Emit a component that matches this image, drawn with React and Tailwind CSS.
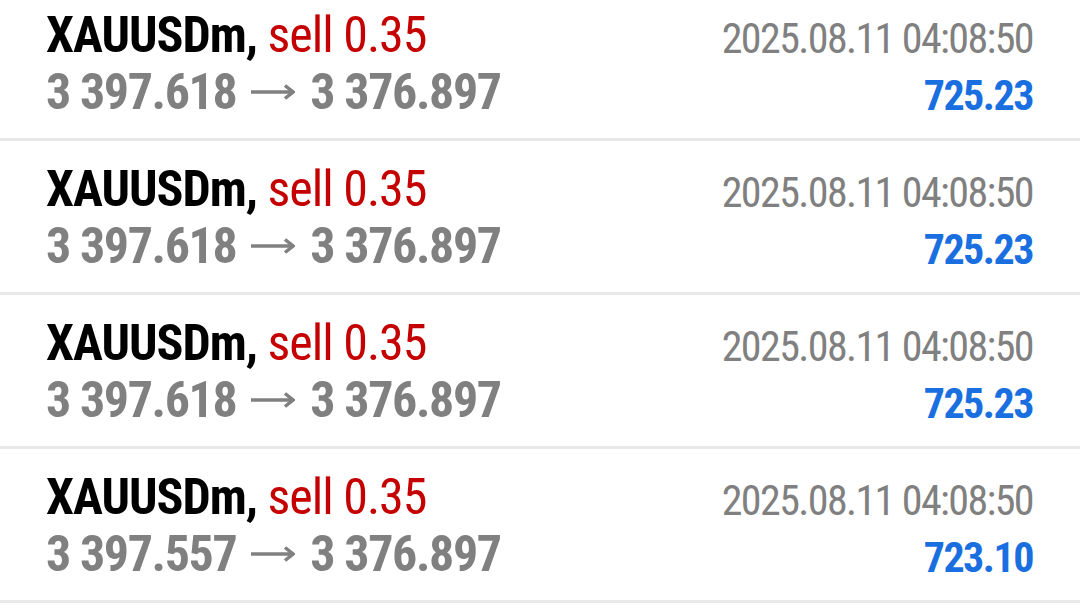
const trades = [
  { open: "3 397.618", close: "3 376.897", profit: "725.23" },
  { open: "3 397.618", close: "3 376.897", profit: "725.23" },
  { open: "3 397.618", close: "3 376.897", profit: "725.23" },
  { open: "3 397.557", close: "3 376.897", profit: "723.10" },
];

function Arrow() {
  return (
    <svg
      width="45"
      height="16"
      viewBox="0 0 45 16"
      className="inline-block ml-[14px] mr-[15px] align-[9px]"
      fill="none"
      stroke="#808080"
      strokeWidth="3.5"
    >
      <path d="M1 8H43" />
      <path d="M35 1.5L43 8L35 14.5" strokeLinejoin="miter" />
    </svg>
  );
}

function TradeRow({ trade }) {
  return (
    <div className="flex justify-between h-[154px] pt-[20px] pl-[46px] pr-[47px] border-b-[3px] border-[#e8e8e8]">
      <div className="flex flex-col">
        <div className="text-[50px] leading-[57px] whitespace-nowrap tracking-[-1px] [font-stretch:condensed]">
          <span className="font-bold text-black">XAUUSDm,</span>{" "}
          <span className="text-[#c40000]">sell 0.35</span>
        </div>
        <div className="text-[50px] leading-[57px] font-bold text-[#808080] whitespace-nowrap tracking-[-1.4px] [font-stretch:condensed]">
          {trade.open}
          <Arrow />
          {trade.close}
        </div>
      </div>
      <div className="flex flex-col items-end pt-[3px]">
        <div className="text-[42px] leading-[57px] text-[#808080] whitespace-nowrap tracking-[-1.6px] [font-stretch:condensed]">
          2025.08.11 04:08:50
        </div>
        <div className="text-[42px] leading-[57px] font-bold text-[#1a6fe0] whitespace-nowrap tracking-[-1.5px] [font-stretch:condensed]">
          {trade.profit}
        </div>
      </div>
    </div>
  );
}

export default function App() {
  return (
    <div className="w-[1080px] h-[608px] overflow-hidden bg-white" style={{ fontFamily: "Roboto, sans-serif" }}>
      <div className="-mt-[13px]">
        {trades.map((t, i) => (
          <TradeRow key={i} trade={t} />
        ))}
      </div>
    </div>
  );
}
